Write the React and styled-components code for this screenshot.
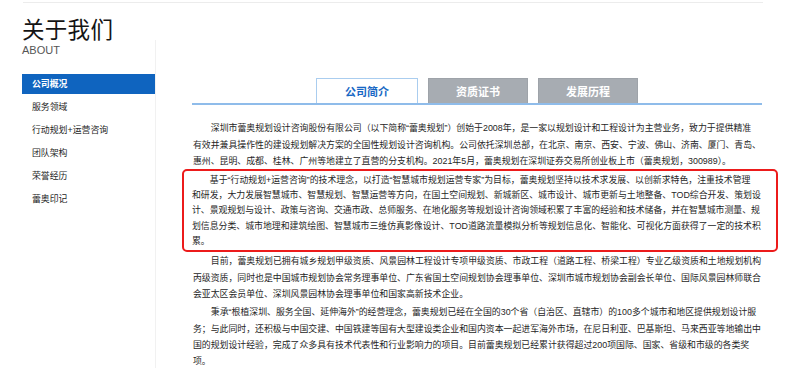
import React from "react";
import styled, { createGlobalStyle } from "styled-components";

const Global = createGlobalStyle`
  html, body { margin: 0; padding: 0; background: #fff; overflow: hidden; }
  body { font-family: "Noto Sans CJK SC", "Noto Sans", sans-serif; color: #333; }
`;

const Page = styled.div`
  width: 741px;
  margin-left: 22px;
  padding-top: 2px;
`;

const TopRule = styled.div`
  border-top: 1px solid #ececec;
  margin-left: 1px;
`;

const Title = styled.h1`
  margin: 13px 0 0;
  font-size: 22.5px;
  line-height: 24px;
  font-weight: 400;
  color: #141414;
  letter-spacing: 0.3px;
`;

const Layout = styled.div`
  display: flex;
  align-items: stretch;
  min-height: 340px;
`;

const Sidebar = styled.aside`
  width: 133px;
  flex: none;
  border-right: 1px solid #f1f1f1;
`;

const About = styled.div`
  margin-top: 4px;
  font-family: "Liberation Sans", Arial, sans-serif;
  font-size: 11px;
  line-height: 13px;
  color: #555;
`;

const Menu = styled.ul`
  list-style: none;
  margin: 17px 0 0;
  padding: 0;
`;

const MenuItem = styled.li`
  height: 20px;
  line-height: 20px;
  margin-bottom: 3px;
  padding-left: 10px;
  font-family: "Liberation Sans", "Noto Sans CJK SC", sans-serif;
  font-size: 8.9px;
  color: ${(p) => (p.$active ? "#fff" : "#262626")};
  background: ${(p) => (p.$active ? "#0f64bf" : "transparent")};
  font-weight: ${(p) => (p.$active ? 600 : 400)};
`;

const Main = styled.main`
  width: 570px;
  margin-left: 36px;
  padding-top: 37.5px;
`;

const Tabs = styled.div`
  display: flex;
  justify-content: center;
  align-items: flex-end;
  gap: 10px;
  border-bottom: 2px solid #8fbcea;
`;

const Tab = styled.div`
  box-sizing: border-box;
  width: ${(p) => (p.$active ? "102px" : "100px")};
  height: 25px;
  display: flex;
  align-items: center;
  justify-content: center;
  font-size: 11px;
  font-weight: 700;
  color: ${(p) => (p.$active ? "#1767c4" : "#fff")};
  background: ${(p) => (p.$active ? "#fff" : "#a7acb2")};
  border: 1px solid ${(p) => (p.$active ? "#aacdef" : "#9ea3a9")};
  border-bottom: none;
`;

const Article = styled.article`
  margin-top: 15.85px;
  padding-left: 1px;
  width: 565px;
`;

const Para = styled.p`
  margin: 0 0 2.2px;
  font-size: 8.9px;
  line-height: 16.3px;
  color: #262626;
`;

const Line = styled.span`
  display: block;
  white-space: nowrap;
  font-family: "Liberation Sans", "Noto Sans CJK SC", sans-serif;
  text-indent: ${(p) => (p.$first ? "2em" : "0")};
`;

const Highlight = styled.div`
  margin: -1.95px -20px 1.5px -11px;
  padding: 1.2px 18px 0 8px;
  border: 2px solid #ec1b1b;
  border-radius: 5px;

  & > p {
    margin: 0;
    line-height: 15.4px;
  }
`;

const Paragraph = ({ lines }) => (
  <Para>
    {lines.map((l, i) => (
      <Line key={i} $first={i === 0}>
        {l}
      </Line>
    ))}
  </Para>
);

const p1 = [
  "深圳市蕾奥规划设计咨询股份有限公司（以下简称“蕾奥规划”）创始于2008年，是一家以规划设计和工程设计为主营业务，致力于提供精准",
  "有效并兼具操作性的建设规划解决方案的全国性规划设计咨询机构。公司依托深圳总部，在北京、南京、西安、宁波、佛山、济南、厦门、青岛、",
  "惠州、昆明、成都、桂林、广州等地建立了直营的分支机构。2021年5月，蕾奥规划在深圳证券交易所创业板上市（蕾奥规划，300989）。",
];

const p2 = [
  "基于“行动规划+运营咨询”的技术理念，以打造“智慧城市规划运营专家”为目标，蕾奥规划坚持以技术求发展、以创新求特色，注重技术管理",
  "和研发，大力发展智慧城市、智慧规划、智慧运营等方向，在国土空间规划、新城新区、城市设计、城市更新与土地整备、TOD综合开发、策划设",
  "计、景观规划与设计、政策与咨询、交通市政、总师服务、在地化服务等规划设计咨询领域积累了丰富的经验和技术储备，并在智慧城市测量、规",
  "划信息分类、城市地理和建筑绘图、智慧城市三维仿真影像设计、TOD道路流量模拟分析等规划信息化、智能化、可视化方面获得了一定的技术积",
  "累。",
];

const p3 = [
  "目前，蕾奥规划已拥有城乡规划甲级资质、风景园林工程设计专项甲级资质、市政工程（道路工程、桥梁工程）专业乙级资质和土地规划机构",
  "丙级资质，同时也是中国城市规划协会常务理事单位、广东省国土空间规划协会理事单位、深圳市城市规划协会副会长单位、国际风景园林师联合",
  "会亚太区会员单位、深圳风景园林协会理事单位和国家高新技术企业。",
];

const p4 = [
  "秉承“根植深圳、服务全国、延伸海外”的经营理念，蕾奥规划已经在全国的30个省（自治区、直辖市）的100多个城市和地区提供规划设计服",
  "务；与此同时，还积极与中国交建、中国铁建等国有大型建设类企业和国内资本一起进军海外市场，在尼日利亚、巴基斯坦、马来西亚等地输出中",
  "国的规划设计经验，完成了众多具有技术代表性和行业影响力的项目。目前蕾奥规划已经累计获得超过200项国际、国家、省级和市级的各类奖",
  "项。",
];

const menu = ["公司概况", "服务领域", "行动规划+运营咨询", "团队架构", "荣誉经历", "蕾奥印记"];
const tabs = ["公司简介", "资质证书", "发展历程"];

export default function App() {
  return (
    <>
      <Global />
      <Page>
        <TopRule />
        <Title>关于我们</Title>
        <Layout>
          <Sidebar>
            <About>ABOUT</About>
            <Menu>
              {menu.map((m, i) => (
                <MenuItem key={m} $active={i === 0}>
                  {m}
                </MenuItem>
              ))}
            </Menu>
          </Sidebar>
          <Main>
            <Tabs>
              {tabs.map((t, i) => (
                <Tab key={t} $active={i === 0}>
                  {t}
                </Tab>
              ))}
            </Tabs>
            <Article>
              <Paragraph lines={p1} />
              <Highlight>
                <Paragraph lines={p2} />
              </Highlight>
              <Paragraph lines={p3} />
              <Paragraph lines={p4} />
            </Article>
          </Main>
        </Layout>
      </Page>
    </>
  );
}
